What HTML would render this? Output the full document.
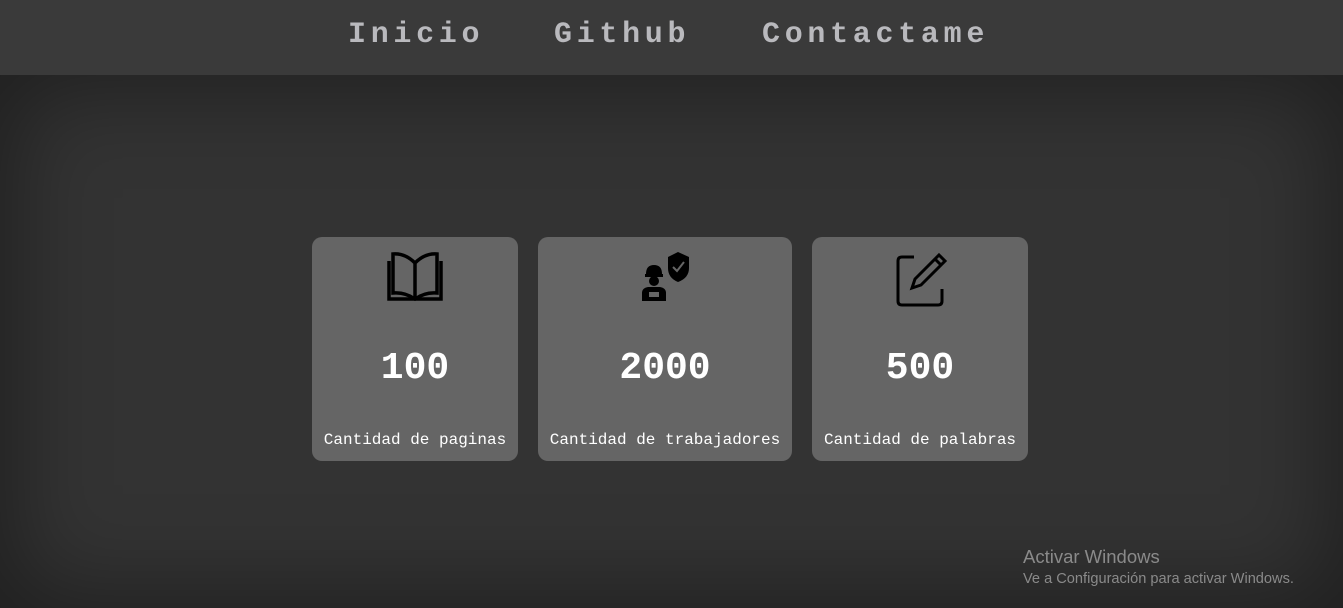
<!DOCTYPE html>
<html><head><meta charset="utf-8"><style>
body{margin:0;width:1343px;height:608px;overflow:hidden;background:#333;font-family:"Liberation Mono",monospace;position:relative}
.vig{position:absolute;left:0;right:0;top:75px;bottom:0;box-shadow:inset 0 0 90px 15px rgba(0,0,0,.38);pointer-events:none}
nav{position:absolute;top:0;left:0;right:0;height:75px;background:#3a3a3a;z-index:2}
nav span{position:absolute;top:18px;font-weight:bold;font-size:30px;letter-spacing:4.7px;color:#b9b9bd}
.card{position:absolute;top:237px;height:224px;background:#656565;border-radius:10px;text-align:center;color:#fff}
.card svg{position:absolute;top:12px;left:50%;transform:translateX(-50%)}
.num{position:absolute;top:110px;left:0;right:0;font-size:38px;font-weight:bold}
.lbl{position:absolute;top:194px;left:0;right:0;font-size:16px}
.w1{position:absolute;left:1023px;top:546px;font-family:"Liberation Sans",sans-serif;font-size:18.5px;color:#8a8a8a}
.w2{position:absolute;left:1023px;top:571px;font-family:"Liberation Sans",sans-serif;font-size:14.6px;color:#8a8a8a}
</style></head><body>
<nav><span style="left:348px">Inicio</span><span style="left:554px">Github</span><span style="left:762px">Contactame</span></nav>
<div class="card" style="left:312px;width:206px">
<svg width="60" height="56" viewBox="0 0 60 56" fill="none" stroke="#000" stroke-width="3.5"><path d="M30 14 Q20 4 8 5 V44 Q20 43 30 50 Q40 43 52 44 V5 Q40 4 30 14 Z M30 14 V50"/><path d="M4 12 V50 H56 V12"/></svg>
<div class="num">100</div><div class="lbl">Cantidad de paginas</div></div>
<div class="card" style="left:538px;width:254px">
<svg width="56" height="56" viewBox="0 0 56 56"><path d="M41 3 L52 8 V19 Q52 29 41 33 Q31 29 31 19 V8 Z" fill="#000"/><path d="M36 18 L40 22 L47 13" stroke="#656565" stroke-width="2" fill="none"/><path d="M9 25 Q9 16 17 16 Q25 16 25 25 Z" fill="#000"/><rect x="8" y="25" width="18" height="3" fill="#000"/><circle cx="17" cy="32" r="5" fill="#000"/><path d="M5 52 V44 Q5 39 11 38 H23 Q29 39 29 44 V52 Z" fill="#000"/><rect x="12" y="43" width="10" height="5" fill="#656565"/></svg>
<div class="num">2000</div><div class="lbl">Cantidad de trabajadores</div></div>
<div class="card" style="left:812px;width:216px">
<svg width="60" height="60" viewBox="0 0 60 60" fill="none" stroke="#000" stroke-width="3"><path d="M24 8 H12 Q8 8 8 12 V52 Q8 56 12 56 H48 Q52 56 52 52 V40"/><path d="M49 6 L55 12 L31 36 L22 39 L25 30 Z M45 10 L51 16"/></svg>
<div class="num">500</div><div class="lbl">Cantidad de palabras</div></div>
<div class="vig"></div>
<div class="w1">Activar Windows</div><div class="w2">Ve a Configuración para activar Windows.</div>
</body></html>
